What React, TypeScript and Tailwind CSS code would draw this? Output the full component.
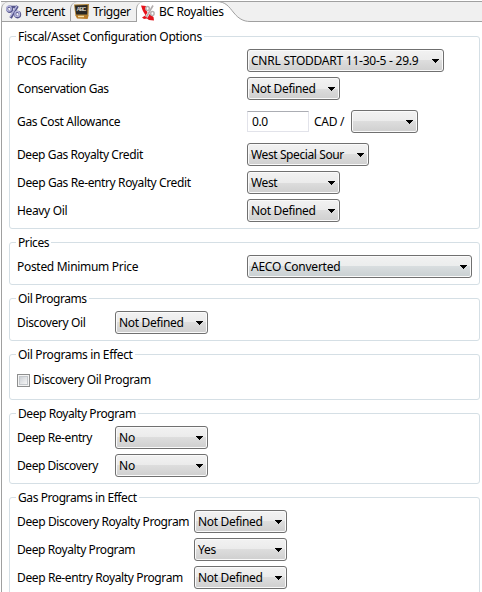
import type { ReactNode } from "react";

function PercentIcon() {
  return (
    <svg className="shrink-0" width="17" height="17" viewBox="0 0 17 17">
      <g fill="none" stroke="#55558c" strokeWidth="2.6">
        <ellipse cx="4.6" cy="6.2" rx="2.2" ry="2.5" />
        <ellipse cx="12.6" cy="11.6" rx="2.3" ry="2.5" />
        <path d="M12.6 3L5.6 15" />
        <path d="M5.5 4h6.5" />
      </g>
      <g fill="none" stroke="#b4b4dc" strokeWidth="1.4">
        <ellipse cx="4" cy="5.6" rx="2.2" ry="2.5" />
        <ellipse cx="12.2" cy="10.9" rx="2.3" ry="2.5" />
        <path d="M11.8 2.8L5 14" />
      </g>
      <circle cx="12.3" cy="11" r="1" fill="#f4f4fc" />
      <circle cx="4.1" cy="5.8" r="1" fill="#f4f4fc" />
    </svg>
  );
}

function TriggerIcon() {
  return (
    <svg className="shrink-0" width="17" height="17" viewBox="0 0 17 17">
      <path d="M1 1.5L16 1L15.4 13L2.5 13Z" fill="#b08438" />
      <path d="M2 2.5L14.6 2L14.2 11.4L3.2 11.4Z" fill="#292825" />
      <path d="M2.5 12.4L15.6 12.6L14.6 16L4 15.4Z" fill="#b97c28" />
      <path d="M5 12.8h6v1.4H5z" fill="#f5dfa6" />
      <text x="3.4" y="8.4" fontSize="5.6" fontWeight="700" fill="#d8d4c8" fontFamily="Liberation Sans, sans-serif" textLength="10">ABC</text>
    </svg>
  );
}

function RoyaltiesIcon() {
  return (
    <svg className="shrink-0" width="17" height="17" viewBox="0 0 17 17">
      <path d="M1 1.5L6 2L5.5 5L8 9L6 12L3.5 8L2.5 6Z" fill="#e8141c" />
      <path d="M2 13.5L6 11L8.5 8L11 11L13.5 13L14 16.5L9 16L7 14.5L4 15Z" fill="#e3141c" />
      <path d="M13 1.5L6.4 13" stroke="#fff" strokeWidth="2.6" />
      <path d="M13 1.5L6.4 13" stroke="#b3adad" strokeWidth="1.6" />
      <g fill="#fff" stroke="#b8b2b2" strokeWidth="1.5">
        <ellipse cx="7.6" cy="4.6" rx="1.7" ry="2" />
        <ellipse cx="12.4" cy="9.4" rx="1.7" ry="2" />
      </g>
    </svg>
  );
}

function Select({ value, className, tint = false }: { value: string; className: string; tint?: boolean }) {
  return (
    <button
      className={`flex h-[23px] shrink-0 items-center justify-between rounded-[3px] border border-[#707070] pr-[4px] pl-[3px] shadow-[inset_0_0_0_1px_#fafafa] ${
        tint
          ? "bg-[linear-gradient(#f2f2f2,#ebeded_50%,#d8dddf_50%,#c9d0d2)]"
          : "bg-[linear-gradient(#f2f2f2,#ebebeb_50%,#dddddd_50%,#cfcfcf)]"
      } ${className}`}
    >
      <span className="whitespace-nowrap">{value}</span>
      <svg width="7" height="4" viewBox="0 0 7 4" shapeRendering="crispEdges">
        <path d="M0 0H7V1H6V2H5V3H4V4H3V3H2V2H1V1H0Z" fill="#000" />
      </svg>
    </button>
  );
}

function Group({ title, tracking, className, children }: { title: string; tracking: string; className: string; children: ReactNode }) {
  return (
    <fieldset className={`w-[471px] shrink-0 rounded-[3px] border border-[#d5dfe5] px-[7px] ${className}`}>
      <legend className={`ml-[-1px] h-[17px] px-[2px] leading-[17px] whitespace-nowrap ${tracking}`}>{title}</legend>
      <div className="flex flex-col gap-[5px] pt-[4px]">{children}</div>
    </fieldset>
  );
}

function Row({ label, labelWidth, tracking, className = "", children }: { label: string; labelWidth: string; tracking: string; className?: string; children: ReactNode }) {
  return (
    <div className={`flex h-[23px] items-center ${className}`}>
      <span className={`shrink-0 whitespace-nowrap ${labelWidth} ${tracking}`}>{label}</span>
      {children}
    </div>
  );
}

export default function App() {
  return (
    <div className="flex h-[592px] w-[482px] flex-col overflow-hidden bg-white pl-px font-['Noto_Sans','Open_Sans',sans-serif] text-[12px] leading-[16px] text-black">
      <nav className="mt-px flex h-[21px] shrink-0 border-t border-[#a0a0a0] bg-[#f0f0f0]">
        <div className="flex w-[69px] items-center rounded-tl-[7px] border-b border-l border-[#a0a0a0] pl-[3px]">
          <PercentIcon />
          <span className="ml-[3px] tracking-[-0.45px]">Percent</span>
        </div>
        <div className="flex w-[66px] items-center rounded-tl-[7px] border-b border-l border-[#a0a0a0] pl-[2px]">
          <TriggerIcon />
          <span className="ml-[3px] tracking-[-0.45px]">Trigger</span>
        </div>
        <div className="flex w-[80px] items-center rounded-tl-[7px] border-l border-[#a0a0a0] bg-white pl-[3px]">
          <RoyaltiesIcon />
          <span className="relative z-10 ml-[2px] whitespace-nowrap tracking-[-0.36px]">BC Royalties</span>
        </div>
        <svg className="-mt-px shrink-0" width="34" height="21" viewBox="0 0 34 21">
          <path d="M0 0.5C10 0.5 13 6 18 12C22 17 27 20.5 34 20.5V21H0Z" fill="#fff" />
          <path d="M0 0.5C10 0.5 13 6 18 12C22 17 27 20.5 34 20.5" fill="none" stroke="#a0a0a0" />
        </svg>
        <div className="flex-1 border-b border-[#a0a0a0]" />
      </nav>
      <main className="flex flex-1 flex-col gap-[5px] overflow-hidden border-l border-[#a0a0a0] pt-[6px] pl-[7px]">
        <Group title="Fiscal/Asset Configuration Options" tracking="tracking-[-0.3px]" className="h-[201px]">
          <Row label="PCOS Facility" labelWidth="w-[230px]" tracking="tracking-[-0.22px]">
            <Select value="CNRL STODDART 11-30-5 - 29.9" className="w-[197px] tracking-[-0.24px]" />
          </Row>
          <Row label="Conservation Gas" labelWidth="w-[230px]" tracking="tracking-[-0.47px]">
            <Select value="Not Defined" className="w-[93px] tracking-[-0.33px]" />
          </Row>
          <Row label="Gas Cost Allowance" labelWidth="w-[230px]" tracking="tracking-[-0.34px]" className="my-[5px]">
            <input defaultValue="0.0" className="h-[21px] w-[62px] border border-[#e2e3ea] border-t-[#abadb3] px-[4px] tracking-[-0.45px]" />
            <span className="w-[42px] pl-[5px] tracking-[-0.28px] whitespace-nowrap">CAD /</span>
            <Select value="" className="w-[67px]" />
          </Row>
          <Row label="Deep Gas Royalty Credit" labelWidth="w-[230px]" tracking="tracking-[-0.4px]">
            <Select value="West Special Sour" className="w-[122px] tracking-[-0.4px]" />
          </Row>
          <Row label="Deep Gas Re-entry Royalty Credit" labelWidth="w-[230px]" tracking="tracking-[-0.38px]">
            <Select value="West" className="w-[93px] tracking-[-0.4px]" />
          </Row>
          <Row label="Heavy Oil" labelWidth="w-[230px]" tracking="tracking-[-0.35px]">
            <Select value="Not Defined" className="w-[93px] tracking-[-0.33px]" />
          </Row>
        </Group>
        <Group title="Prices" tracking="tracking-[-0.4px]" className="h-[51px]">
          <Row label="Posted Minimum Price" labelWidth="w-[230px]" tracking="tracking-[-0.3px]">
            <Select value="AECO Converted" tint className="w-[225px] tracking-[-0.24px]" />
          </Row>
        </Group>
        <Group title="Oil Programs" tracking="tracking-[-0.42px]" className="h-[51px]">
          <Row label="Discovery Oil" labelWidth="w-[98px]" tracking="tracking-[-0.35px]">
            <Select value="Not Defined" className="w-[93px] tracking-[-0.33px]" />
          </Row>
        </Group>
        <Group title="Oil Programs in Effect" tracking="tracking-[-0.35px]" className="h-[54px]">
          <label className="mt-[3px] flex h-[20px] items-center gap-[3px]">
            <span className="flex size-[13px] border border-[#8e8f8f] bg-[#f4f4f4] p-px">
              <span className="flex-1 border border-[#c4c8cc] bg-[linear-gradient(135deg,#cdd1d6,#f6f6f6)]" />
            </span>
            <span className="tracking-[-0.36px]">Discovery Oil Program</span>
          </label>
        </Group>
        <Group title="Deep Royalty Program" tracking="tracking-[-0.42px]" className="h-[79px]">
          <Row label="Deep Re-entry" labelWidth="w-[98px]" tracking="tracking-[-0.42px]">
            <Select value="No" className="w-[93px] tracking-[-0.1px]" />
          </Row>
          <Row label="Deep Discovery" labelWidth="w-[98px]" tracking="tracking-[-0.45px]">
            <Select value="No" className="w-[93px] tracking-[-0.1px]" />
          </Row>
        </Group>
        <Group title="Gas Programs in Effect" tracking="tracking-[-0.42px]" className="h-[120px]">
          <Row label="Deep Discovery Royalty Program" labelWidth="w-[177px]" tracking="tracking-[-0.38px]">
            <Select value="Not Defined" className="w-[93px] tracking-[-0.33px]" />
          </Row>
          <Row label="Deep Royalty Program" labelWidth="w-[177px]" tracking="tracking-[-0.4px]">
            <Select value="Yes" className="w-[93px] tracking-[-0.2px]" />
          </Row>
          <Row label="Deep Re-entry Royalty Program" labelWidth="w-[177px]" tracking="tracking-[-0.38px]">
            <Select value="Not Defined" className="w-[93px] tracking-[-0.33px]" />
          </Row>
        </Group>
      </main>
    </div>
  );
}
